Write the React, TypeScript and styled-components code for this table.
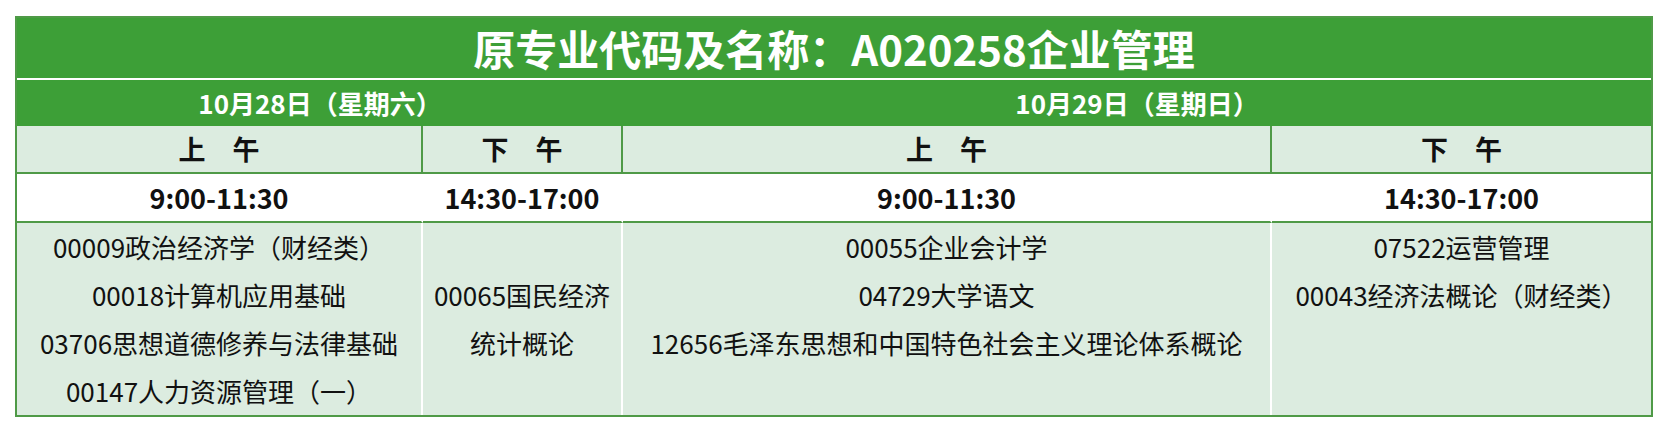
import React from 'react';
import styled, { createGlobalStyle } from 'styled-components';

const GREEN = '#3d9f37';
const LINE = '#4f9a47';
const PALE = '#dcece0';

const GlobalStyle = createGlobalStyle`
  html, body {
    margin: 0;
    padding: 0;
    background: #fff;
  }
  body {
    font-family: "Noto Sans CJK SC", "Noto Sans", sans-serif;
    color: #111;
  }
`;

const Page = styled.div`
  padding: 16px 0 0 15px;
`;

const Table = styled.table`
  width: 1634px;
  table-layout: fixed;
  border-collapse: separate;
  border-spacing: 0;
  border: 2px solid ${LINE};
`;

const TitleCell = styled.td`
  height: 60px;
  padding: 0;
  background: ${GREEN};
  border-bottom: 2px solid #fff;
  color: #fff;
  font-size: 42px;
  font-weight: 700;
  text-align: center;
  vertical-align: middle;
  line-height: 60px;
`;

const DateCell = styled.td`
  height: 46px;
  padding: 0;
  background: ${GREEN};
  color: #fff;
  font-size: 26px;
  font-weight: 700;
  text-align: center;
  vertical-align: middle;
  line-height: 46px;
`;

const HalfCell = styled.td<{ $last?: boolean }>`
  height: 46px;
  padding: 0;
  background: ${PALE};
  border-right: ${(p) => (p.$last ? 'none' : `2px solid ${LINE}`)};
  border-bottom: 2px solid ${LINE};
  font-size: 27px;
  font-weight: 700;
  text-align: center;
  vertical-align: middle;
  line-height: 46px;
`;

const TimeCell = styled.td<{ $last?: boolean }>`
  height: 47px;
  padding: 0;
  background: #fff;
  border-right: ${(p) => (p.$last ? 'none' : '2px solid #fff')};
  border-bottom: 2px solid ${LINE};
  font-size: 27px;
  font-weight: 700;
  text-align: center;
  vertical-align: middle;
  line-height: 47px;
`;

const CourseCell = styled.td<{ $last?: boolean; $middle?: boolean }>`
  height: 191px;
  padding: 0;
  background: ${PALE};
  border-right: ${(p) => (p.$last ? 'none' : '2px solid #fff')};
  font-size: 26px;
  font-weight: 400;
  text-align: center;
  vertical-align: ${(p) => (p.$middle ? 'middle' : 'top')};
  line-height: 48px;
`;

const Course = styled.div`
  white-space: nowrap;
`;

const columns = [406, 200, 649, 379];

const days = [
  {
    date: '10月28日（星期六）',
    slots: [
      {
        half: '上　午',
        time: '9:00-11:30',
        courses: [
          '00009政治经济学（财经类）',
          '00018计算机应用基础',
          '03706思想道德修养与法律基础',
          '00147人力资源管理（一）',
        ],
      },
      {
        half: '下　午',
        time: '14:30-17:00',
        courses: ['00065国民经济', '统计概论'],
        middle: true,
      },
    ],
  },
  {
    date: '10月29日（星期日）',
    slots: [
      {
        half: '上　午',
        time: '9:00-11:30',
        courses: [
          '00055企业会计学',
          '04729大学语文',
          '12656毛泽东思想和中国特色社会主义理论体系概论',
        ],
      },
      {
        half: '下　午',
        time: '14:30-17:00',
        courses: ['07522运营管理', '00043经济法概论（财经类）'],
      },
    ],
  },
];

const slots = days.flatMap((d) => d.slots);

export default function App() {
  return (
    <Page>
      <GlobalStyle />
      <Table>
        <colgroup>
          {columns.map((w, i) => (
            <col key={i} style={{ width: w }} />
          ))}
        </colgroup>
        <tbody>
          <tr>
            <TitleCell colSpan={4}>原专业代码及名称：A020258企业管理</TitleCell>
          </tr>
          <tr>
            {days.map((d) => (
              <DateCell key={d.date} colSpan={2}>
                {d.date}
              </DateCell>
            ))}
          </tr>
          <tr>
            {slots.map((s, i) => (
              <HalfCell key={i} $last={i === slots.length - 1}>
                {s.half}
              </HalfCell>
            ))}
          </tr>
          <tr>
            {slots.map((s, i) => (
              <TimeCell key={i} $last={i === slots.length - 1}>
                {s.time}
              </TimeCell>
            ))}
          </tr>
          <tr>
            {slots.map((s, i) => (
              <CourseCell
                key={i}
                $last={i === slots.length - 1}
                $middle={'middle' in s && s.middle}
              >
                {s.courses.map((c) => (
                  <Course key={c}>{c}</Course>
                ))}
              </CourseCell>
            ))}
          </tr>
        </tbody>
      </Table>
    </Page>
  );
}
